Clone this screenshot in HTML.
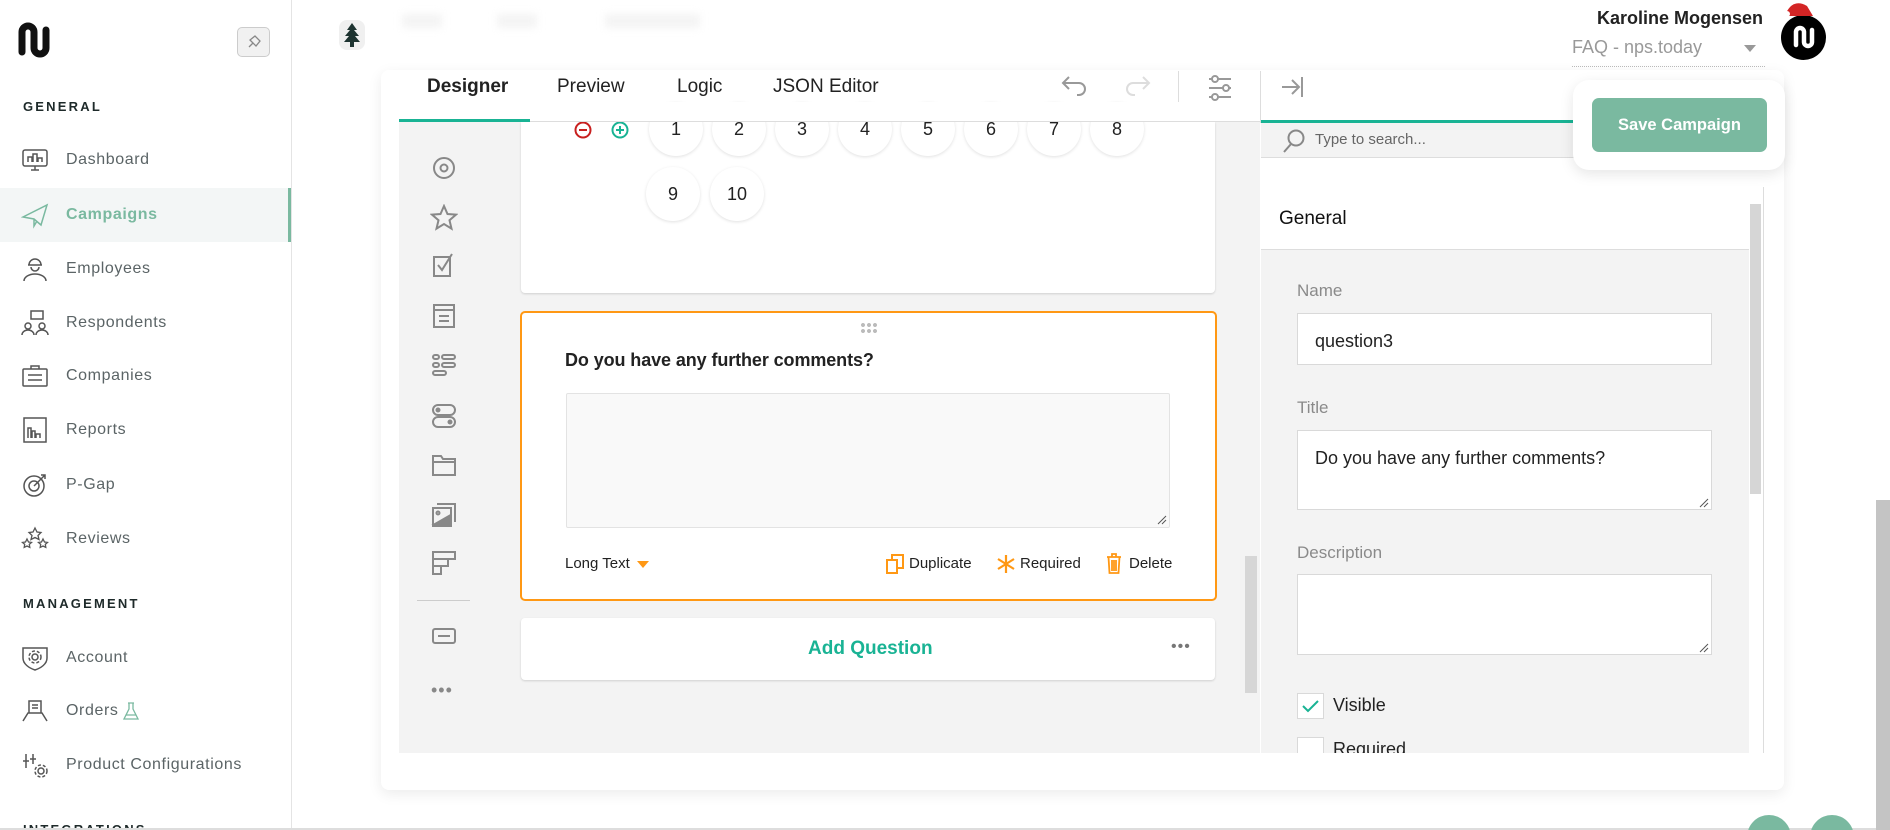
<!DOCTYPE html>
<html><head><meta charset="utf-8"><style>
*{margin:0;padding:0;box-sizing:border-box}
html{width:1890px;height:830px;overflow:hidden}
body{width:1890px;height:830px;overflow:hidden;background:#fff;font-family:"Liberation Sans",sans-serif;position:relative;color:#222}
.a{position:absolute}
.side{left:0;top:0;width:292px;height:830px;border-right:1px solid #e4e4e4;background:#fff;overflow:hidden}
.sec{left:23px;font-size:13px;font-weight:bold;letter-spacing:2.2px;color:#1e2a2a}
.it{left:0;width:291px;height:54px;display:flex;align-items:center}
.it svg{position:absolute;left:21px;width:28px;height:28px}
.it span{position:absolute;left:66px;font-size:16px;color:#5b6466;letter-spacing:.6px}
.card{left:381px;top:70px;width:1403px;height:720px;background:#fff;border-radius:8px;box-shadow:0 4px 14px rgba(0,0,0,.08)}
.tab{top:76px;font-size:19px;color:#222}
.circ{width:54px;height:54px;border-radius:50%;box-shadow:0 1px 3px rgba(0,0,0,.12);background:#fff;display:flex;align-items:center;justify-content:center;font-size:18px;color:#222}
.tool{left:430px;width:28px;height:28px}
.lbl{left:1297px;font-size:17px;color:#8a8a8a}
.inp{left:1297px;width:415px;background:#fff;border:1px solid #d9d9d9}
.ft{font-size:15px;color:#222;top:555px}
</style></head><body>
<div class="a side">
<svg class="a" style="left:18px;top:22px" width="34" height="36" viewBox="0 0 34 36"><path d="M4 30V10a6 6 0 0 1 12 0v16a6 6 0 0 0 12 0V8" fill="none" stroke="#111" stroke-width="7" stroke-linecap="round"/></svg>
<div class="a" style="left:237px;top:27px;width:33px;height:30px;border:1px solid #ccc;border-radius:5px;background:#f1f1f1"><svg width="31" height="28" viewBox="0 0 31 28"><path d="M11 19l4-4m0 0l-3-3 5-4 5 5-4 5z" fill="none" stroke="#888" stroke-width="1.3"/></svg></div>
<div class="a sec" style="top:99px">GENERAL</div>
<div class="a it" style="top:133px"><svg viewBox="0 0 28 28" fill="none" stroke="#555" stroke-width="1.5"><rect x="2" y="4" width="24" height="16" rx="2"/><path d="M7 16v-5h4v5M12 16V8h4v8M17 16v-4h4v4M10 24h8M14 20v4"/></svg><span>Dashboard</span></div>
<div class="a it" style="top:188px;background:#f3f6f6;border-right:3px solid #7ab9a0"><svg viewBox="0 0 28 28" fill="none" stroke="#7ab9a0" stroke-width="1.5"><path d="M2 16L26 4 20 24 13 18zM13 18v7l3-5M2 16l11 2"/></svg><span style="color:#7ab9a0;font-weight:bold">Campaigns</span></div>
<div class="a it" style="top:242px"><svg viewBox="0 0 28 28" fill="none" stroke="#555" stroke-width="1.5"><path d="M8 10a6 6 0 0 1 12 0zM7 10h14M10 12a4 4 0 0 0 8 0M3 26a11 7 0 0 1 22 0"/></svg><span>Employees</span></div>
<div class="a it" style="top:296px"><svg viewBox="0 0 28 28" fill="none" stroke="#555" stroke-width="1.5"><rect x="10" y="2" width="12" height="8"/><circle cx="7" cy="17" r="3"/><circle cx="21" cy="17" r="3"/><path d="M1 26a6 5 0 0 1 12 0M15 26a6 5 0 0 1 12 0"/></svg><span>Respondents</span></div>
<div class="a it" style="top:349px"><svg viewBox="0 0 28 28" fill="none" stroke="#555" stroke-width="1.5"><rect x="2" y="7" width="24" height="17" rx="1"/><path d="M10 7V4h8v3M7 13h14M7 18h14"/></svg><span>Companies</span></div>
<div class="a it" style="top:403px"><svg viewBox="0 0 28 28" fill="none" stroke="#555" stroke-width="1.5"><rect x="3" y="2" width="22" height="24"/><path d="M7 22V12h3v10M11 22v-7h3v7M15 22v-4h4v4"/></svg><span>Reports</span></div>
<div class="a it" style="top:458px"><svg viewBox="0 0 28 28" fill="none" stroke="#555" stroke-width="1.5"><circle cx="13" cy="15" r="10"/><circle cx="13" cy="15" r="5"/><path d="M13 15L24 4M20 4h4v4"/></svg><span>P-Gap</span></div>
<div class="a it" style="top:512px"><svg viewBox="0 0 28 28" fill="none" stroke="#555" stroke-width="1.3"><path d="M14 3l2 4 4 .5-3 3 1 4-4-2-4 2 1-4-3-3 4-.5zM6 14l1.5 3 3 .4-2.2 2 .5 3L6 21l-2.8 1.4.5-3-2.2-2 3-.4zM22 14l1.5 3 3 .4-2.2 2 .5 3L22 21l-2.8 1.4.5-3-2.2-2 3-.4z"/></svg><span>Reviews</span></div>
<div class="a sec" style="top:596px">MANAGEMENT</div>
<div class="a it" style="top:631px"><svg viewBox="0 0 28 28" fill="none" stroke="#555" stroke-width="1.5"><path d="M2 4h24v10c0 6-6 10-12 12C8 24 2 20 2 14z"/><circle cx="14" cy="13" r="3"/><circle cx="14" cy="13" r="6" stroke-dasharray="3 2"/></svg><span>Account</span></div>
<div class="a it" style="top:684px"><svg viewBox="0 0 28 28" fill="none" stroke="#555" stroke-width="1.5"><path d="M8 4h12v12H8zM11 8h6M11 11h6M2 24l5-8h14l5 8"/></svg><span>Orders</span><svg style="left:121px;width:20px;height:20px" viewBox="0 0 20 20" fill="none" stroke="#7ab9a0" stroke-width="1.3"><path d="M7 2h6M8 2v6L3 18h14L12 8V2M5 14h10"/></svg></div>
<div class="a it" style="top:738px"><svg viewBox="0 0 28 28" fill="none" stroke="#555" stroke-width="1.5"><path d="M5 3v14M2 10h6M12 3v10M9 8h6"/><circle cx="20" cy="20" r="3"/><circle cx="20" cy="20" r="6" stroke-dasharray="3 2"/></svg><span>Product Configurations</span></div>
<div class="a sec" style="top:822px">INTEGRATIONS</div>
</div>
<div class="a" style="left:0;top:828px;width:1890px;height:2px;background:#ddd"></div>

<!-- top bar -->
<div class="a" style="left:339px;top:20px;width:26px;height:30px;background:#f0f0f0;border-radius:8px"><svg width="26" height="30" viewBox="0 0 26 30"><path d="M13 3l-5 7h3l-5 6h4l-5 6h16l-5-6h4l-5-6h3zM11 22h4v5h-4z" fill="#1d3330"/></svg></div>
<div class="a" style="left:402px;top:14px;width:40px;height:14px;background:#f4f4f4;filter:blur(4px)"></div>
<div class="a" style="left:497px;top:14px;width:40px;height:14px;background:#f4f4f4;filter:blur(4px)"></div>
<div class="a" style="left:605px;top:14px;width:95px;height:14px;background:#f4f4f4;filter:blur(4px)"></div>
<div class="a" style="left:1597px;top:8px;font-size:18px;font-weight:bold;color:#222">Karoline Mogensen</div>
<div class="a" style="left:1572px;top:37px;font-size:18px;color:#999">FAQ - nps.today</div>
<div class="a" style="left:1744px;top:45px;border:6px solid transparent;border-top:7px solid #999"></div>
<div class="a" style="left:1572px;top:66px;width:193px;border-top:1px dotted #bbb"></div>
<div class="a" style="left:1781px;top:15px;width:45px;height:45px;border-radius:50%;background:#000"><svg width="45" height="45" viewBox="0 0 45 45"><path d="M15 30V17a4 4 0 0 1 8 0v10a4 4 0 0 0 8 0V15" fill="none" stroke="#fff" stroke-width="4.5" stroke-linecap="round"/></svg></div>
<svg class="a" style="left:1783px;top:0" width="34" height="18" viewBox="0 0 34 18"><path d="M2 16C6 4 14 0 24 6l6 10z" fill="#d32525"/><circle cx="4" cy="14" r="3" fill="#fff"/></svg>

<div class="a card"></div>
<!-- tabs -->
<div class="a tab" style="left:427px;font-weight:bold">Designer</div>
<div class="a tab" style="left:557px">Preview</div>
<div class="a tab" style="left:677px">Logic</div>
<div class="a tab" style="left:773px">JSON Editor</div>
<svg class="a" style="left:1060px;top:73px" width="30" height="28" viewBox="0 0 30 28" fill="none" stroke="#999" stroke-width="2"><path d="M9 4L3 10l6 6M3 10h16a6 6 0 0 1 0 12h-2"/></svg>
<svg class="a" style="left:1122px;top:73px" width="30" height="28" viewBox="0 0 30 28" fill="none" stroke="#ddd" stroke-width="2"><path d="M21 4l6 6-6 6M27 10H11a6 6 0 0 0 0 12h2"/></svg>
<div class="a" style="left:1178px;top:71px;width:1px;height:38px;background:#ddd"></div>
<svg class="a" style="left:1207px;top:73px" width="28" height="30" viewBox="0 0 28 30" fill="none" stroke="#999" stroke-width="2"><path d="M2 6h22M2 15h22M2 24h22"/><circle cx="8" cy="6" r="3" fill="#fff"/><circle cx="19" cy="15" r="3" fill="#fff"/><circle cx="8" cy="24" r="3" fill="#fff"/></svg>
<div class="a" style="left:1260px;top:71px;width:1px;height:52px;background:#ddd"></div>
<svg class="a" style="left:1280px;top:74px" width="26" height="26" viewBox="0 0 26 26" fill="none" stroke="#999" stroke-width="2"><path d="M2 13h16M12 6l7 7-7 7M22 3v20"/></svg>

<!-- designer -->
<div class="a" style="left:399px;top:122px;width:861px;height:631px;background:#f3f3f3"></div>
<svg class="a tool" style="top:154px" viewBox="0 0 28 28" fill="none" stroke="#888" stroke-width="2"><circle cx="14" cy="14" r="10"/><circle cx="14" cy="14" r="3.5"/></svg>
<svg class="a tool" style="top:204px" viewBox="0 0 28 28" fill="none" stroke="#888" stroke-width="2"><path d="M14 2l3.5 8 8.5.6-6.5 5.6 2 8.4L14 20l-7.5 4.6 2-8.4L2 10.6l8.5-.6z"/></svg>
<svg class="a tool" style="top:252px" viewBox="0 0 28 28" fill="none" stroke="#888" stroke-width="2"><path d="M4 5h16v19H4zM8 13l4 5 10-16"/></svg>
<svg class="a tool" style="top:302px" viewBox="0 0 28 28" fill="none" stroke="#888" stroke-width="2"><path d="M4 3h20v22H4zM4 8h20M9 14h10M9 19h10"/></svg>
<svg class="a tool" style="top:351px" viewBox="0 0 28 28" fill="none" stroke="#888" stroke-width="2"><rect x="3" y="4" width="6" height="4" rx="2"/><rect x="12" y="4" width="13" height="4" rx="2"/><rect x="3" y="12" width="6" height="4" rx="2"/><rect x="12" y="12" width="13" height="4" rx="2"/><rect x="3" y="20" width="13" height="4" rx="2"/></svg>
<svg class="a tool" style="top:402px" viewBox="0 0 28 28" fill="none" stroke="#888" stroke-width="2"><rect x="3" y="3" width="22" height="10" rx="5"/><rect x="3" y="15" width="22" height="10" rx="5"/><circle cx="8" cy="8" r="1.5" fill="#888"/><circle cx="20" cy="20" r="1.5" fill="#888"/></svg>
<svg class="a tool" style="top:451px" viewBox="0 0 28 28" fill="none" stroke="#888" stroke-width="2"><path d="M3 5h8l2 3h12v16H3zM3 11h22"/></svg>
<svg class="a tool" style="top:501px" viewBox="0 0 28 28" fill="none" stroke="#888" stroke-width="2"><path d="M7 3h18v18M3 7h18v18H3z"/><circle cx="8" cy="12" r="1.5"/><path d="M5 23l14-8v8z" fill="#888"/></svg>
<svg class="a tool" style="top:549px" viewBox="0 0 28 28" fill="none" stroke="#888" stroke-width="2"><path d="M3 3h22v7H3zM3 10h15v7H3zM3 17h8v8H3z"/></svg>
<div class="a" style="left:417px;top:600px;width:53px;height:1px;background:#ccc"></div>
<svg class="a tool" style="top:622px" viewBox="0 0 28 28" fill="none" stroke="#888" stroke-width="2"><rect x="3" y="7" width="22" height="14" rx="2"/><path d="M8 14h12"/></svg>
<div class="a" style="left:431px;top:680px;font-size:18px;color:#888;letter-spacing:1px">•••</div>

<!-- card 1 -->
<div class="a" style="left:521px;top:122px;width:694px;height:171px;background:#fff;border-radius:0 0 4px 4px;box-shadow:0 1px 2px rgba(0,0,0,.15)"></div>
<svg class="a" style="left:574px;top:121px" width="18" height="18" viewBox="0 0 18 18" fill="none" stroke="#c8201f" stroke-width="2"><circle cx="9" cy="9" r="7.5"/><path d="M5 9h8"/></svg>
<svg class="a" style="left:611px;top:121px" width="18" height="18" viewBox="0 0 18 18" fill="none" stroke="#19b394" stroke-width="2"><circle cx="9" cy="9" r="7.5"/><path d="M5 9h8M9 5v8"/></svg>
<div class="a circ" style="left:649px;top:102px">1</div>
<div class="a circ" style="left:712px;top:102px">2</div>
<div class="a circ" style="left:775px;top:102px">3</div>
<div class="a circ" style="left:838px;top:102px">4</div>
<div class="a circ" style="left:901px;top:102px">5</div>
<div class="a circ" style="left:964px;top:102px">6</div>
<div class="a circ" style="left:1027px;top:102px">7</div>
<div class="a circ" style="left:1090px;top:102px">8</div>
<div class="a" style="left:399px;top:102px;width:861px;height:20px;background:#fff"></div>
<div class="a" style="left:399px;top:121px;width:1386px;height:1px;background:#ddd"></div>
<div class="a" style="left:399px;top:119px;width:131px;height:3px;background:#19b394"></div>
<div class="a" style="left:1261px;top:120px;width:320px;height:3px;background:#19b394"></div>
<div class="a circ" style="left:646px;top:167px">9</div>
<div class="a circ" style="left:710px;top:167px">10</div>

<!-- card 2 -->
<div class="a" style="left:520px;top:311px;width:697px;height:290px;background:#fff;border:2px solid #ff9814;border-radius:5px"></div>
<div class="a" style="left:860px;top:322px;width:18px;height:12px;background:radial-gradient(circle,#bbb 1.8px,transparent 2.2px) 0 0/6px 6px"></div>
<div class="a" style="left:565px;top:350px;font-size:18px;font-weight:bold;color:#222;letter-spacing:-.1px">Do you have any further comments?</div>
<div class="a" style="left:566px;top:393px;width:604px;height:135px;background:#f9f9f9;border:1px solid #e3e3e3;border-radius:2px"></div>
<svg class="a" style="left:1157px;top:515px" width="10" height="10" viewBox="0 0 10 10" stroke="#555"><path d="M1 9L9 1M5 9L9 5"/></svg>
<div class="a ft" style="left:565px">Long Text</div>
<div class="a" style="left:637px;top:561px;border:6px solid transparent;border-top:7px solid #ff9814"></div>
<svg class="a" style="left:886px;top:554px" width="18" height="20" viewBox="0 0 18 20" fill="none" stroke="#ff9814" stroke-width="2"><rect x="1" y="6" width="10" height="13"/><path d="M6 6V1h11v13h-6"/></svg>
<div class="a ft" style="left:909px">Duplicate</div>
<svg class="a" style="left:996px;top:554px" width="20" height="20" viewBox="0 0 20 20" fill="none" stroke="#ff9814" stroke-width="2.2"><path d="M10 1v18M2 5l16 10M18 5L2 15"/></svg>
<div class="a ft" style="left:1020px">Required</div>
<svg class="a" style="left:1106px;top:553px" width="16" height="21" viewBox="0 0 16 21" fill="none" stroke="#ff9814" stroke-width="1.8"><path d="M1 4h14M6 4V1h4v3M2.5 4l1 16h9l1-16M6 7v11M8 7v11M10 7v11"/></svg>
<div class="a ft" style="left:1129px">Delete</div>

<!-- add question -->
<div class="a" style="left:521px;top:618px;width:694px;height:62px;background:#fff;border-radius:4px;box-shadow:0 1px 2px rgba(0,0,0,.15)"></div>
<div class="a" style="left:808px;top:638px;font-size:19px;font-weight:bold;color:#19b394">Add Question</div>
<div class="a" style="left:1171px;top:638px;font-size:16px;color:#777;letter-spacing:1px">•••</div>
<div class="a" style="left:1245px;top:556px;width:12px;height:137px;background:#d6d6d6"></div>

<!-- right panel -->
<div class="a" style="left:1261px;top:123px;width:505px;height:35px;background:#f3f3f3;border-bottom:1px solid #ddd"></div>
<svg class="a" style="left:1282px;top:128px" width="24" height="26" viewBox="0 0 24 26" fill="none" stroke="#888" stroke-width="2"><circle cx="14" cy="10" r="7.5"/><path d="M9 16l-7 8"/></svg>
<div class="a" style="left:1315px;top:131px;font-size:15px;color:#666">Type to search...</div>
<div class="a" style="left:1279px;top:208px;font-size:19px;color:#111">General</div>
<div class="a" style="left:1261px;top:249px;width:488px;height:504px;background:#f3f3f3;border-top:1px solid #ddd;overflow:hidden">
<div class="a lbl" style="left:36px;top:31px">Name</div>
<div class="a inp" style="left:36px;top:63px;height:52px"></div>
<div class="a" style="left:54px;top:81px;font-size:18px;color:#222">question3</div>
<div class="a lbl" style="left:36px;top:148px">Title</div>
<div class="a inp" style="left:36px;top:180px;height:80px"></div>
<div class="a" style="left:54px;top:198px;font-size:18px;color:#222">Do you have any further comments?</div>
<svg class="a" style="left:438px;top:248px" width="10" height="10" viewBox="0 0 10 10" stroke="#555"><path d="M1 9L9 1M5 9L9 5"/></svg>
<div class="a lbl" style="left:36px;top:293px">Description</div>
<div class="a inp" style="left:36px;top:324px;height:81px"></div>
<svg class="a" style="left:438px;top:393px" width="10" height="10" viewBox="0 0 10 10" stroke="#555"><path d="M1 9L9 1M5 9L9 5"/></svg>
<div class="a" style="left:36px;top:443px;width:27px;height:26px;background:#fff;border:1px solid #d9d9d9"><svg width="25" height="24" viewBox="0 0 25 24" fill="none" stroke="#19b394" stroke-width="2"><path d="M5 12l5 5 10-10"/></svg></div>
<div class="a" style="left:72px;top:445px;font-size:18px;color:#222">Visible</div>
<div class="a" style="left:36px;top:487px;width:27px;height:26px;background:#fff;border:1px solid #d9d9d9"></div>
<div class="a" style="left:72px;top:489px;font-size:18px;color:#222">Required</div>
</div>
<div class="a" style="left:1763px;top:187px;width:1px;height:566px;background:#ddd"></div>
<div class="a" style="left:1750px;top:204px;width:11px;height:290px;background:#d6d6d6"></div>

<!-- save popup -->
<div class="a" style="left:1573px;top:80px;width:212px;height:90px;background:#fff;border-radius:16px;box-shadow:0 4px 14px rgba(0,0,0,.1)"></div>
<div class="a" style="left:1592px;top:98px;width:175px;height:54px;background:#7ab9a0;border-radius:7px;color:#fff;font-weight:bold;font-size:16.5px;display:flex;align-items:center;justify-content:center">Save Campaign</div>

<div class="a" style="left:1876px;top:500px;width:14px;height:330px;background:#c4c4c4"></div>
<div class="a" style="left:1747px;top:815px;width:44px;height:44px;border-radius:50%;background:#7ab9a0"></div>
<div class="a" style="left:1810px;top:815px;width:44px;height:44px;border-radius:50%;background:#7ab9a0"></div>
</body></html>
